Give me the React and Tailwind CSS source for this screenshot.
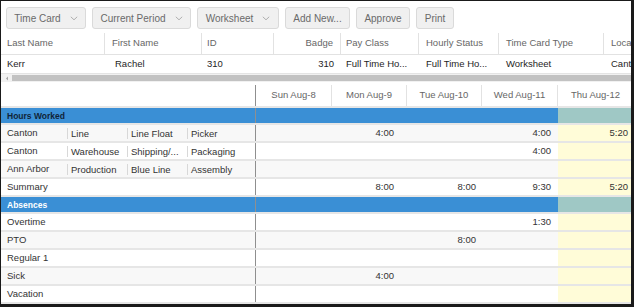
import React from "react";

const F = { fontFamily: '"Liberation Sans", Arial, sans-serif' };

function Chevron() {
  return (
    <svg width="8" height="5" viewBox="0 0 8 5" className="ml-[9px]">
      <path d="M0.8 0.8 L4 3.8 L7.2 0.8" fill="none" stroke="#a8a8a8" strokeWidth="0.9" />
    </svg>
  );
}

function Btn({ label, dd, w }) {
  return (
    <div
      className={`h-[22px] shrink-0 flex items-center justify-center rounded-[3px] border border-[#dadada] bg-[#f0f0f0] text-[#6a6a6a] text-[10px] whitespace-nowrap ${w}`}
    >
      <span>{label}</span>
      {dd && <Chevron />}
    </div>
  );
}

const days = ["Sun Aug-8", "Mon Aug-9", "Tue Aug-10", "Wed Aug-11", "Thu Aug-12"];

const rows = [
  { type: "group", label: "Hours Worked", dark: true },
  { cells: ["Canton", "Line", "Line Float", "Picker"], v: ["", "4:00", "", "4:00", "5:20"], alt: true },
  { cells: ["Canton", "Warehouse", "Shipping/...", "Packaging"], v: ["", "", "", "4:00", ""], alt: false },
  { cells: ["Ann Arbor", "Production", "Blue Line", "Assembly"], v: ["", "", "", "", ""], alt: true },
  { label: "Summary", v: ["", "8:00", "8:00", "9:30", "5:20"], alt: false },
  { type: "group", label: "Absences" },
  { label: "Overtime", v: ["", "", "", "1:30", ""], alt: false },
  { label: "PTO", v: ["", "", "8:00", "", ""], alt: true },
  { label: "Regular 1", v: ["", "", "", "", ""], alt: false },
  { label: "Sick", v: ["", "4:00", "", "", ""], alt: true },
  { label: "Vacation", v: ["", "", "", "", ""], alt: false },
];

const colW = ["w-[76px]", "w-[75px]", "w-[75px]", "w-[76px]", "w-[75px]"];
const valPad = ["pr-[7px]", "pr-[13px]", "pr-[6px]", "pr-[7px]", "pr-[5px]"];

export default function App() {
  return (
    <div
      style={F}
      className="w-[634px] h-[307px] overflow-hidden bg-white border-t border-l border-r-[3px] border-b-[3px] border-[#1a1a1a] text-[9.5px] text-[#333] flex flex-col"
    >
      {/* toolbar */}
      <div className="h-[32px] shrink-0 flex items-start gap-[6px] pl-[5px] pt-[6px]">
        <Btn label="Time Card" dd w="w-[80px]" />
        <Btn label="Current Period" dd w="w-[99px]" />
        <Btn label="Worksheet" dd w="w-[82px]" />
        <Btn label="Add New..." w="w-[65px]" />
        <Btn label="Approve" w="w-[54px]" />
        <Btn label="Print" w="w-[38px]" />
      </div>
      {/* header table */}
      <div className="h-[22px] shrink-0 flex items-center text-[#666] border-b border-[#e2e2e2] whitespace-nowrap">
        <div className="w-[104px] shrink-0 pl-[6px] h-full flex items-center border-r border-[#e2e2e2]">Last Name</div>
        <div className="w-[97px] shrink-0 pl-[7px] h-full flex items-center border-r border-[#e2e2e2]">First Name</div>
        <div className="w-[72px] shrink-0 pl-[5px] h-full flex items-center border-r border-[#e2e2e2]">ID</div>
        <div className="w-[67px] shrink-0 pr-[7px] h-full flex items-center justify-end border-r border-[#e2e2e2]">Badge</div>
        <div className="w-[78px] shrink-0 pl-[5px] h-full flex items-center border-r border-[#e2e2e2]">Pay Class</div>
        <div className="w-[80px] shrink-0 pl-[7px] h-full flex items-center border-r border-[#e2e2e2]">Hourly Status</div>
        <div className="w-[105px] shrink-0 pl-[7px] h-full flex items-center border-r border-[#e2e2e2]">Time Card Type</div>
        <div className="pl-[7px] h-full flex items-center">Location</div>
      </div>
      <div className="h-[18px] shrink-0 flex items-center text-[#1e1e1e] whitespace-nowrap">
        <div className="w-[104px] shrink-0 pl-[6px]">Kerr</div>
        <div className="w-[97px] shrink-0 pl-[10px]">Rachel</div>
        <div className="w-[72px] shrink-0 pl-[5px]">310</div>
        <div className="w-[67px] shrink-0 pr-[7px] text-right">310</div>
        <div className="w-[78px] shrink-0 pl-[5px]">Full Time Ho...</div>
        <div className="w-[80px] shrink-0 pl-[7px]">Full Time Ho...</div>
        <div className="w-[105px] shrink-0 pl-[7px]">Worksheet</div>
        <div className="pl-[7px]">Canton</div>
      </div>
      {/* scrollbar */}
      <div className="h-[9px] shrink-0 flex items-center bg-[#f1f1f1] border-t border-[#e4e4e4]">
        <div className="w-[11px] h-full flex items-center justify-center">
          <svg width="4" height="5" viewBox="0 0 4 5">
            <path d="M3 0.5 L1 2.5 L3 4.5 Z" fill="#a3a3a3" />
          </svg>
        </div>
        <div className="flex-1 h-[6px] bg-[#c2c2c2]" />
      </div>
      <div className="h-[3px] shrink-0" />
      {/* grid */}
      <div className="flex-1 flex flex-col">
        <div className="h-[23px] shrink-0 flex border-b-2 border-[#e6e6e6] text-[#666]">
          <div className="w-[255px] shrink-0 border-r border-[#8f8f8f]" />
          {days.map((d, i) => (
            <div
              key={d}
              className={`${colW[i]} shrink-0 flex items-center justify-center ${i < 4 ? "border-r border-[#e2e2e2]" : ""}`}
            >
              {d}
            </div>
          ))}
        </div>
        {rows.map((r, ri) => {
          if (r.type === "group") {
            return (
              <div key={ri} className="h-[17px] shrink-0 flex font-bold text-[8.5px] bg-[#3a8fd5] border-b-2 border-[#e6e6e6]">
                <div className={`w-[255px] shrink-0 pl-[6px] pt-[1px] flex items-center border-r border-[#8f8f8f] ${r.dark ? "text-[#102438]" : "text-white"}`}>
                  {r.label}
                </div>
                <div className="w-[302px] shrink-0" />
                <div className="w-[75px] shrink-0 bg-[#9fc8c5]" />
              </div>
            );
          }
          const bg = r.alt ? "bg-[#f8f8f8]" : "bg-white";
          return (
            <div key={ri} className={`h-[18px] shrink-0 flex border-b-2 border-[#e6e6e6] ${bg}`}>
              <div className="w-[255px] shrink-0 pt-[1px] flex items-center border-r border-[#8f8f8f] whitespace-nowrap">
                {r.cells ? (
                  <>
                    <div className="w-[66px] shrink-0 pl-[6px]">{r.cells[0]}</div>
                    <div className="w-[60px] shrink-0 pl-[3px] border-l border-[#d8d8d8] leading-[11px]">{r.cells[1]}</div>
                    <div className="w-[60px] shrink-0 pl-[3px] border-l border-[#d8d8d8] leading-[11px]">{r.cells[2]}</div>
                    <div className="pl-[3px] border-l border-[#d8d8d8] leading-[11px]">{r.cells[3]}</div>
                  </>
                ) : (
                  <div className="pl-[6px]">{r.label}</div>
                )}
              </div>
              {r.v.map((v, i) => (
                <div
                  key={i}
                  className={`${colW[i]} shrink-0 pt-[1px] flex items-center justify-end ${valPad[i]} ${i === 4 ? "bg-[#fffcd8]" : ""}`}
                >
                  {v}
                </div>
              ))}
            </div>
          );
        })}
      </div>
    </div>
  );
}
